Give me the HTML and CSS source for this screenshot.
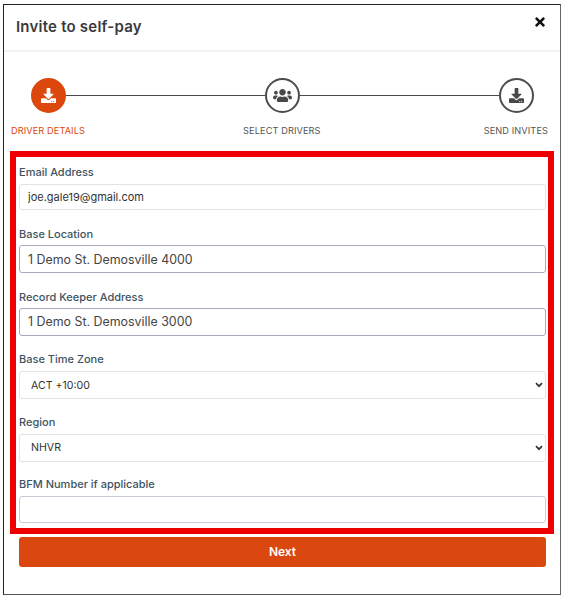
FILE: index.html
```html
<!DOCTYPE html>
<html lang="en">
<head>
<meta charset="utf-8">
<title>Invite to self-pay</title>
<link rel="stylesheet" href="styles.css">
</head>
<body>
<div class="modal">
  <header class="modal-header">
    <h1 class="modal-title">Invite to self-pay</h1>
    <svg class="close-icon" viewBox="0 0 352 512" aria-label="Close"><path d="M242.72 256l100.07-100.07c12.28-12.28 12.28-32.19 0-44.48l-22.24-22.24c-12.28-12.28-32.19-12.28-44.48 0L176 189.28 75.93 89.21c-12.28-12.28-32.19-12.28-44.48 0L9.21 111.45c-12.28 12.28-12.28 32.19 0 44.48L109.28 256 9.21 356.07c-12.28 12.28-12.28 32.19 0 44.48l22.24 22.24c12.28 12.28 32.2 12.28 44.48 0L176 322.72l100.07 100.07c12.28 12.28 32.2 12.28 44.48 0l22.24-22.24c12.28-12.28 12.28-32.19 0-44.48L242.72 256z"/></svg>
  </header>
  <div class="stepper">
    <div class="step-track">
      <span class="step-circle step-circle-active">
        <svg class="step-icon" viewBox="0 0 512 512"><path d="M216 0h80c13.3 0 24 10.7 24 24v168h87.7c17.8 0 26.7 21.5 14.1 34.1L269.7 378.3c-7.5 7.5-19.8 7.5-27.3 0L90.1 226.1c-12.6-12.6-3.7-34.1 14.1-34.1H192V24c0-13.3 10.7-24 24-24zm296 376v112c0 13.3-10.7 24-24 24H24c-13.3 0-24-10.7-24-24V376c0-13.3 10.7-24 24-24h146.7l49 49c20.1 20.1 52.5 20.1 72.6 0l49-49H488c13.3 0 24 10.7 24 24zm-124 88c0-11-9-20-20-20s-20 9-20 20 9 20 20 20 20-9 20-20zm64 0c0-11-9-20-20-20s-20 9-20 20 9 20 20 20 20-9 20-20z"/></svg>
      </span>
      <span class="step-line"></span>
      <span class="step-circle">
        <svg class="step-icon step-icon-wide" viewBox="0 0 640 512"><path d="M96 224c35.3 0 64-28.7 64-64s-28.7-64-64-64-64 28.7-64 64 28.7 64 64 64zm448 0c35.3 0 64-28.7 64-64s-28.7-64-64-64-64 28.7-64 64 28.7 64 64 64zm32 32h-64c-17.6 0-33.5 7.1-45.1 18.6 40.3 22.1 68.9 62 75.1 109.4h66c17.7 0 32-14.3 32-32v-32c0-35.3-28.7-64-64-64zm-256 0c61.9 0 112-50.1 112-112S381.9 32 320 32 208 82.1 208 144s50.1 112 112 112zm76.8 32h-8.3c-20.8 10-43.9 16-68.5 16s-47.6-6-68.5-16h-8.3C179.6 288 128 339.6 128 403.2V432c0 26.5 21.5 48 48 48h288c26.5 0 48-21.5 48-48v-28.8c0-63.6-51.6-115.2-115.2-115.2zm-223.7-13.4C161.5 263.1 145.6 256 128 256H64c-35.3 0-64 28.7-64 64v32c0 17.7 14.3 32 32 32h65.9c6.3-47.4 34.9-87.3 75.2-109.4z"/></svg>
      </span>
      <span class="step-line"></span>
      <span class="step-circle">
        <svg class="step-icon" viewBox="0 0 512 512"><path d="M216 0h80c13.3 0 24 10.7 24 24v168h87.7c17.8 0 26.7 21.5 14.1 34.1L269.7 378.3c-7.5 7.5-19.8 7.5-27.3 0L90.1 226.1c-12.6-12.6-3.7-34.1 14.1-34.1H192V24c0-13.3 10.7-24 24-24zm296 376v112c0 13.3-10.7 24-24 24H24c-13.3 0-24-10.7-24-24V376c0-13.3 10.7-24 24-24h146.7l49 49c20.1 20.1 52.5 20.1 72.6 0l49-49H488c13.3 0 24 10.7 24 24zm-124 88c0-11-9-20-20-20s-20 9-20 20 9 20 20 20 20-9 20-20zm64 0c0-11-9-20-20-20s-20 9-20 20 9 20 20 20 20-9 20-20z"/></svg>
      </span>
    </div>
    <div class="step-labels">
      <span class="step-label step-label-active">DRIVER DETAILS</span>
      <span class="step-label step-label-middle">SELECT DRIVERS</span>
      <span class="step-label">SEND INVITES</span>
    </div>
  </div>
  <form class="form-box">
    <div class="field">
      <label class="field-label" for="email">Email Address</label>
      <input class="control control-soft control-small" id="email" type="text" value="joe.gale19@gmail.com">
    </div>
    <div class="field">
      <label class="field-label" for="base">Base Location</label>
      <input class="control control-strong" id="base" type="text" value="1 Demo St. Demosville 4000">
    </div>
    <div class="field">
      <label class="field-label" for="keeper">Record Keeper Address</label>
      <input class="control control-strong" id="keeper" type="text" value="1 Demo St. Demosville 3000">
    </div>
    <div class="field">
      <label class="field-label" for="zone">Base Time Zone</label>
      <select class="control control-soft control-small control-select" id="zone"><option>ACT +10:00</option></select>
    </div>
    <div class="field">
      <label class="field-label" for="region">Region</label>
      <select class="control control-soft control-small control-select" id="region"><option>NHVR</option></select>
    </div>
    <div class="field">
      <label class="field-label" for="bfm">BFM Number if applicable</label>
      <input class="control control-mid" id="bfm" type="text">
    </div>
  </form>
  <button class="next-button" type="button">Next</button>
</div>
</body>
</html>
```
FILE: styles.css
```css
* { box-sizing: border-box; }
html, body { margin: 0; background: #fff; }
body {
  padding: 4px 3px 3px;
  font-family: Inter, "Open Sans", "Liberation Sans", sans-serif;
}
.modal {
  width: 558px;
  height: 591px;
  border: 1px solid #222;
  border-right-color: #666;
  border-bottom-color: #555;
  background: #fff;
  display: flex;
  flex-direction: column;
}
.modal-header {
  height: 47px;
  flex: none;
  padding: 0 15px 0 12px;
  border-bottom: 2px solid #f3f3f3;
  display: flex;
  justify-content: space-between;
  align-items: flex-start;
}
.modal-title {
  margin: 12px 0 0;
  font-size: 15px;
  line-height: 20px;
  font-weight: 600;
  letter-spacing: .22px;
  color: #3a3a3c;
}
.close-icon { width: 10px; height: 14px; margin-top: 10px; fill: #111; }
.stepper { padding: 26px 12px 0 7px; }
.step-track { display: flex; align-items: center; padding: 0 14px 0 20px; }
.step-circle {
  width: 35px;
  height: 35px;
  flex: none;
  border: 2px solid #4c4c4e;
  border-radius: 50%;
  background: #fff;
  display: flex;
  align-items: center;
  justify-content: center;
}
.step-circle-active { background: #dc470e; border-color: #dc470e; }
.step-line { flex: 1; height: 1.5px; background: #4a4a4c; }
.step-icon { width: 15px; height: 15px; fill: #48484a; }
.step-icon-wide { width: 19px; }
.step-circle-active .step-icon { fill: #fff; }
.step-labels { display: flex; justify-content: space-between; margin-top: 11px; }
.step-label { font-size: 9.2px; line-height: 13px; font-weight: 400; color: #555; letter-spacing: .1px; }
.step-label-active { color: #dc470e; }
.step-label-middle { margin-right: 5px; }
.form-box {
  margin: 14px 6px 0;
  height: 383px;
  flex: none;
  border: 6px solid #ee0000;
  padding: 8px 2px 0 3px;
  display: flex;
  flex-direction: column;
}
.field { height: 62.4px; flex: none; }
.field-label {
  display: block;
  font-size: 11px;
  line-height: 15px;
  font-weight: 500;
  color: #3e5361;
}
.control {
  display: block;
  width: 100%;
  height: 27px;
  margin-top: 4px;
  padding: 0 8px;
  border-radius: 3px;
  background: #fff;
  color: #444;
  font-family: inherit;
  font-size: 12.4px;
  outline: none;
}
.control-soft { border: 1px solid #dfe2e8; }
.control-strong { border: 1px solid #a6a9ba; height: 28px; margin-top: 3px; }
.control-mid { border: 1px solid #c9ccd6; }
.control-small { font-size: 11px; color: #333; height: 26px; }
.control-select {
  height: 28px;
  padding: 0 11px;
  font-size: 10.6px;
  appearance: none;
  background-image: url("data:image/svg+xml,%3Csvg xmlns='http://www.w3.org/2000/svg' viewBox='0 0 8 6'%3E%3Cpath d='M1 1.2l3 3 3-3' fill='none' stroke='%23333' stroke-width='1.7'/%3E%3C/svg%3E");
  background-repeat: no-repeat;
  background-position: right 2px center;
  background-size: 8px 6px;
}
.next-button {
  margin: 3px 14px 0 15px;
  height: 30px;
  flex: none;
  border: none;
  border-radius: 3px;
  padding: 0 0 2px;
  background: #db480f;
  color: #fff;
  font-family: inherit;
  font-size: 12px;
  font-weight: 600;
}
```
